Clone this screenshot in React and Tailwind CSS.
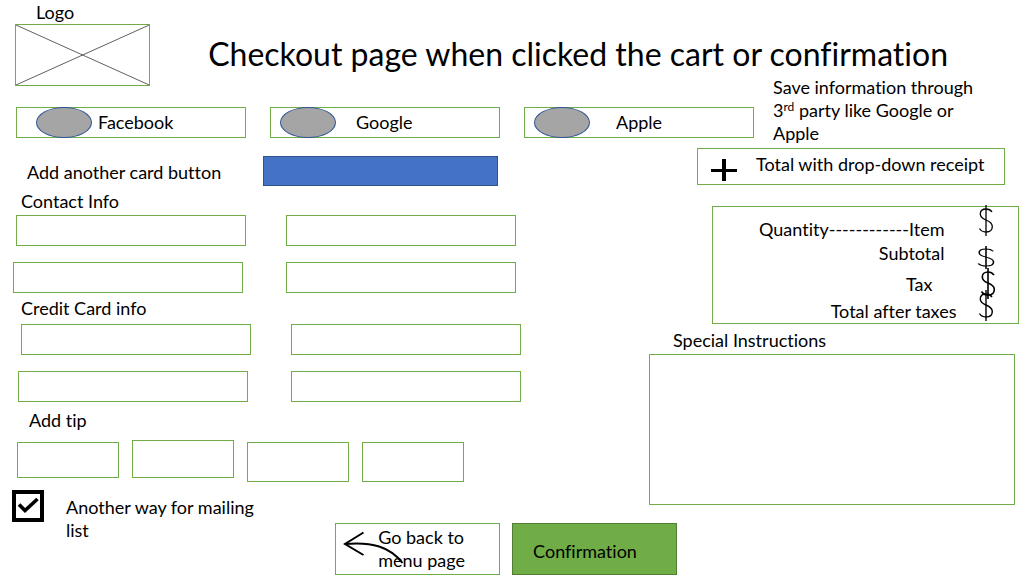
import React from "react";

const providers = [
  { name: "Facebook", layout: "pl-[19px] gap-[6px]" },
  { name: "Google", layout: "pl-[9px] gap-5" },
  { name: "Apple", layout: "pl-[9px] gap-[26px]" },
];

const receipt = [
  { label: "Quantity------------Item", row: "h-[35px]", cell: "pt-[10px] pr-3", icon: "h-[31px] w-5 -mt-[2px]", valign: "align-top pl-5", stroke: 1.3 },
  { label: "Subtotal", row: "h-[27px]", cell: "pr-3 pb-1", icon: "h-[23px] w-6", valign: "align-bottom pl-[18px]", stroke: 1.3 },
  { label: "Tax", row: "h-[31px]", cell: "pr-6", icon: "h-[31px] w-5 -mt-[1px]", valign: "align-top pl-[22px]", stroke: 1.6 },
  { label: "Total after taxes", row: "h-[23px]", cell: "", icon: "h-[31px] w-5 -mt-[10px]", valign: "align-top pl-5", stroke: 1.4 },
];

const tips = ["mt-[2px] h-9", "h-[38px]", "mt-[2px] h-10", "mt-[2px] h-10"];

function DollarIcon({ className, stroke }) {
  return (
    <svg viewBox="0 0 20 31" preserveAspectRatio="none" className={`block ${className}`} fill="none" stroke="black" strokeWidth={stroke} aria-hidden="true">
      <path d="M10 0V31" />
      <path d="M16 7C14.5 4.800 12.500 4 10 4C6.500 4 4.300 6 4.300 9C4.300 12.500 7 13.800 10 15C13.500 16.400 16.300 17.800 16.300 21.500C16.300 25 13.800 27 10 27C7 27 5 26 3.500 23.500" />
    </svg>
  );
}

function Field({ label, type = "text" }) {
  return <input type={type} aria-label={label} className="h-[31px] min-w-0 flex-1 border border-[#70ad47] bg-white px-2 outline-none" />;
}

export default function App() {
  return (
    <main className="min-h-screen overflow-x-hidden bg-white font-['Lato',sans-serif] text-[18px] leading-[23px] text-black [font-variant-ligatures:none]">
      <header className="flex pl-[15px]">
        <div className="w-[13.4%] pt-[1px]">
          <p className="pl-[21px]">Logo</p>
          <svg viewBox="0 0 135 62" preserveAspectRatio="none" className="block h-[62px] w-full border border-[#70ad47]" role="img" aria-label="Logo">
            <path d="M0 0L135 62M135 0L0 62" stroke="#333" strokeWidth="0.8" />
          </svg>
        </div>
        <h1 className="pt-[34px] pl-[58px] text-[32px] leading-10">Checkout page when clicked the cart or confirmation</h1>
      </header>

      <section className="grid grid-cols-[738fr_221fr] items-start gap-[19px] pr-[30px] pl-4">
        <div className="mt-[21px] grid grid-cols-3 gap-6">
          {providers.map((p) => (
            <button key={p.name} type="button" className={`flex h-[31px] items-center border border-[#70ad47] ${p.layout}`}>
              <span className="-my-px h-[31px] w-14 shrink-0 rounded-[50%] border border-[#2f5597] bg-[#a5a5a5]" />
              {p.name}
            </button>
          ))}
        </div>
        <p className="-mt-[10px] mb-[1px]">
          Save information through 3<sup className="text-[12px] leading-none">rd</sup> party like Google or Apple
        </p>
      </section>

      <div className="mt-[2px] grid grid-cols-[649fr_375fr]">
        <form id="checkout" className="min-w-0 pt-2">
          <div className="flex pl-[27px]">
            <label htmlFor="add-card" className="w-[38%] pt-[5px]">Add another card button</label>
            <button id="add-card" type="button" className="h-[30px] w-[37.8%] border border-[#2f528f] bg-[#4472c4]" />
          </div>

          <h2 className="mt-1 pl-[21px]">Contact Info</h2>
          <div className="mt-[2px] flex gap-10 pr-[20.5%] pl-4">
            <Field label="Contact first name" />
            <Field label="Contact last name" />
          </div>
          <div className="mt-4 flex gap-[43px] pr-[20.5%] pl-[13px]">
            <Field label="Contact email" type="email" />
            <Field label="Contact phone" type="tel" />
          </div>

          <h2 className="mt-1 pl-[21px]">Credit Card info</h2>
          <div className="mt-1 flex gap-10 pr-[19.7%] pl-[21px]">
            <Field label="Name on card" />
            <Field label="Card number" />
          </div>
          <div className="mt-4 flex gap-[43px] pr-[19.7%] pl-[18px]">
            <Field label="Card expiry" />
            <Field label="Card security code" />
          </div>

          <h2 className="mt-[7px] pl-[29px]">Add tip</h2>
          <div className="mt-2 flex items-start gap-[13px] pr-[28.5%] pl-[17px]">
            {tips.map((size, i) => (
              <button key={i} type="button" aria-label={`Tip option ${i + 1}`} className={`flex-1 border border-[#70ad47] ${size}`} />
            ))}
          </div>

          <div className="-mr-7 mt-2 flex items-start pl-3">
            <div className="flex w-[48.6%] items-start gap-[22px]">
              <div className="relative size-8 shrink-0">
                <input id="mailing" type="checkbox" defaultChecked className="block size-8 appearance-none border-4 border-black bg-white" />
                <svg viewBox="0 0 32 32" className="pointer-events-none absolute inset-0 size-8" fill="none" stroke="black" strokeWidth="3.600" aria-hidden="true">
                  <path d="M7 14.500L13 20.500L25.500 9" />
                </svg>
              </div>
              <label htmlFor="mailing" className="w-[200px] pt-[6px]">Another way for mailing list</label>
            </div>
            <div className="mt-[33px] grid flex-1 grid-cols-2 gap-3">
              <button type="button" className="relative h-[52px] border border-[#70ad47] pl-[42px] text-left">
                Go back to<br />menu page
                <svg viewBox="0 0 70 50" className="absolute top-0 left-0 h-[50px] w-[70px]" fill="none" stroke="black" strokeWidth="2" aria-hidden="true">
                  <path d="M27.500 8.500L9 20L27.500 31" />
                  <path d="M9 20C36 17.500 54 23 66.500 39" />
                </svg>
              </button>
              <button type="submit" className="h-[52px] border border-[#507e32] bg-[#70ad47] pt-1 pl-5 text-left">Confirmation</button>
            </div>
          </div>
        </form>

        <aside className="min-w-0">
          <button type="button" className="ml-[12.8%] flex h-[37px] w-[82%] border border-[#70ad47]">
            <svg viewBox="0 0 28 24" className="mt-[9px] ml-3 h-6 w-7 shrink-0" stroke="black" fill="none" aria-hidden="true">
              <path d="M14 1V23" strokeWidth="4" />
              <path d="M1 12.500H27" strokeWidth="3" />
            </svg>
            <span className="mt-1 ml-[18px] whitespace-nowrap">Total with drop-down receipt</span>
          </button>

          <div className="mt-[21px] ml-[16.8%] w-[82%] border border-[#70ad47]">
            <table className="w-full border-collapse">
              <tbody>
                {receipt.map((r) => (
                  <tr key={r.label} className={r.row}>
                    <th scope="row" className={`p-0 text-right font-normal ${r.cell}`}>{r.label}</th>
                    <td className={`w-[62px] p-0 ${r.valign}`}>
                      <DollarIcon className={r.icon} stroke={r.stroke} />
                    </td>
                  </tr>
                ))}
              </tbody>
            </table>
          </div>

          <label htmlFor="instructions" className="mt-[5px] block pl-6">Special Instructions</label>
          <textarea id="instructions" className="mt-[2px] block h-[151px] w-[97.6%] resize-none border border-[#70ad47] p-2 outline-none" />
        </aside>
      </div>
    </main>
  );
}
